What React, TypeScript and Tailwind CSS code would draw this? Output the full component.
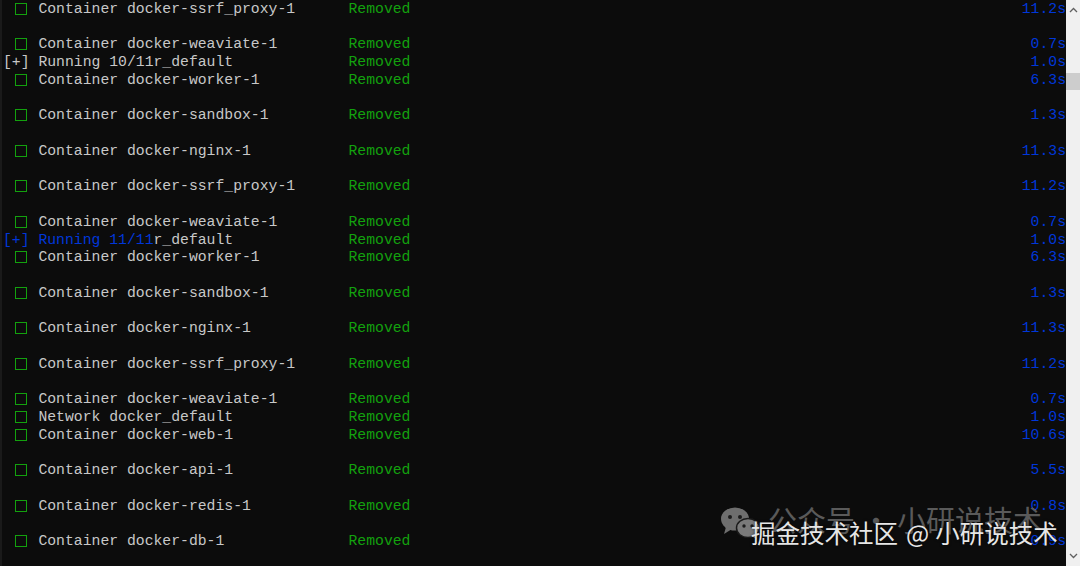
import React from "react";

type Row =
  | { kind: "blank" }
  | { kind: "box"; name: string; time: string }
  | { kind: "plus"; blue: boolean; name: string; rest: string; time: string };

const C = (name: string, time: string): Row => ({ kind: "box", name, time });
const B: Row = { kind: "blank" };

const rows: Row[] = [
  C("Container docker-ssrf_proxy-1", "11.2s"),
  B,
  C("Container docker-weaviate-1", "0.7s"),
  { kind: "plus", blue: false, name: "Running 10/11", rest: "r_default", time: "1.0s" },
  C("Container docker-worker-1", "6.3s"),
  B,
  C("Container docker-sandbox-1", "1.3s"),
  B,
  C("Container docker-nginx-1", "11.3s"),
  B,
  C("Container docker-ssrf_proxy-1", "11.2s"),
  B,
  C("Container docker-weaviate-1", "0.7s"),
  { kind: "plus", blue: true, name: "Running 11/11", rest: "r_default", time: "1.0s" },
  C("Container docker-worker-1", "6.3s"),
  B,
  C("Container docker-sandbox-1", "1.3s"),
  B,
  C("Container docker-nginx-1", "11.3s"),
  B,
  C("Container docker-ssrf_proxy-1", "11.2s"),
  B,
  C("Container docker-weaviate-1", "0.7s"),
  C("Network docker_default", "1.0s"),
  C("Container docker-web-1", "10.6s"),
  B,
  C("Container docker-api-1", "5.5s"),
  B,
  C("Container docker-redis-1", "0.8s"),
  B,
  C("Container docker-db-1", "0.9s"),
];

function Line({ row }: { row: Row }) {
  if (row.kind === "blank") return <div className="h-[17.75px]" />;
  return (
    <div className="flex h-[17.75px] items-center whitespace-pre">
      <div className="flex w-[35.43px] shrink-0 items-center">
        {row.kind === "box" ? (
          <span className="ml-[12px] inline-block h-[12px] w-[12px] border border-[#13a10e]" />
        ) : (
          <span className={row.blue ? "text-[#0037da]" : "text-[#c8c8c8]"}>[+]</span>
        )}
      </div>
      <div className="w-[310.1px] shrink-0">
        {row.kind === "box" ? (
          <span className="text-[#c8c8c8]">{row.name}</span>
        ) : (
          <>
            <span className={row.blue ? "text-[#0037da]" : "text-[#c8c8c8]"}>{row.name}</span>
            <span className="text-[#c8c8c8]">{row.rest}</span>
          </>
        )}
      </div>
      <span className="text-[#13a10e]">Removed</span>
      <span className="flex-1 text-right text-[#0037da]">{row.time}</span>
    </div>
  );
}

function WeChatIcon() {
  return (
    <svg width="40" height="32" viewBox="0 0 40 32">
      <ellipse cx="15" cy="12" rx="14" ry="11.5" fill="#6e6e6e" />
      <path d="M6 20 L4 27 L12 22 Z" fill="#6e6e6e" />
      <circle cx="10" cy="10" r="2" fill="#1c1c1c" />
      <circle cx="20" cy="10" r="2" fill="#1c1c1c" />
      <ellipse cx="28" cy="21" rx="11.5" ry="9.5" fill="#7a7a7a" stroke="#1a1a1a" strokeWidth="1.5" />
      <path d="M34 28 L37 32 L31 29 Z" fill="#7a7a7a" />
      <circle cx="24" cy="19" r="1.7" fill="#1c1c1c" />
      <circle cx="32" cy="19" r="1.7" fill="#1c1c1c" />
    </svg>
  );
}

export default function App() {
  return (
    <div className="relative flex h-[566px] w-[1080px] overflow-hidden bg-[#0c0c0c]">
      <div className="w-[2px] shrink-0 bg-[#1a1a1a]" />
      <div
        className="w-[1064px] shrink-0 pl-[1px] text-[14.75px]"
        style={{ fontFamily: '"Liberation Mono", "DejaVu Sans Mono", monospace' }}
      >
        {rows.map((r, i) => (
          <Line key={i} row={r} />
        ))}
      </div>
      <div className="flex w-[14px] shrink-0 flex-col bg-[#f0f0f0]">
        <div className="flex h-[20px] items-center justify-center">
          <svg width="9" height="6" viewBox="0 0 9 6">
            <path d="M1 5 L4.5 1.5 L8 5" fill="none" stroke="#606060" strokeWidth="1.3" />
          </svg>
        </div>
        <div className="mt-[53px] h-[17px] bg-[#cdcdcd]" />
        <div className="flex-1" />
        <div className="flex h-[20px] items-center justify-center">
          <svg width="9" height="6" viewBox="0 0 9 6">
            <path d="M1 1 L4.5 4.5 L8 1" fill="none" stroke="#606060" strokeWidth="1.3" />
          </svg>
        </div>
      </div>

      <div
        className="pointer-events-none absolute left-[720px] top-[499px]"
        style={{ fontFamily: '"Noto Sans CJK SC", sans-serif' }}
      >
        <div className="flex items-center gap-[8px]">
          <div className="mt-[8px]">
            <WeChatIcon />
          </div>
          <span className="text-[29px] leading-[36px] text-[#5a5a5a]">公众号 · 小研说技术</span>
        </div>
      </div>
      <div
        className="pointer-events-none absolute left-[751px] top-[517px] flex text-[24.5px] leading-[32px] text-[#e6e6e6]"
        style={{ fontFamily: '"Noto Sans CJK SC", sans-serif', textShadow: "0 0 3px rgba(0,0,0,0.6)" }}
      >
        <span>掘金技术社区</span>
        <span className="ml-[8px] mr-[6px]">@</span>
        <span>小研说技术</span>
      </div>
    </div>
  );
}
